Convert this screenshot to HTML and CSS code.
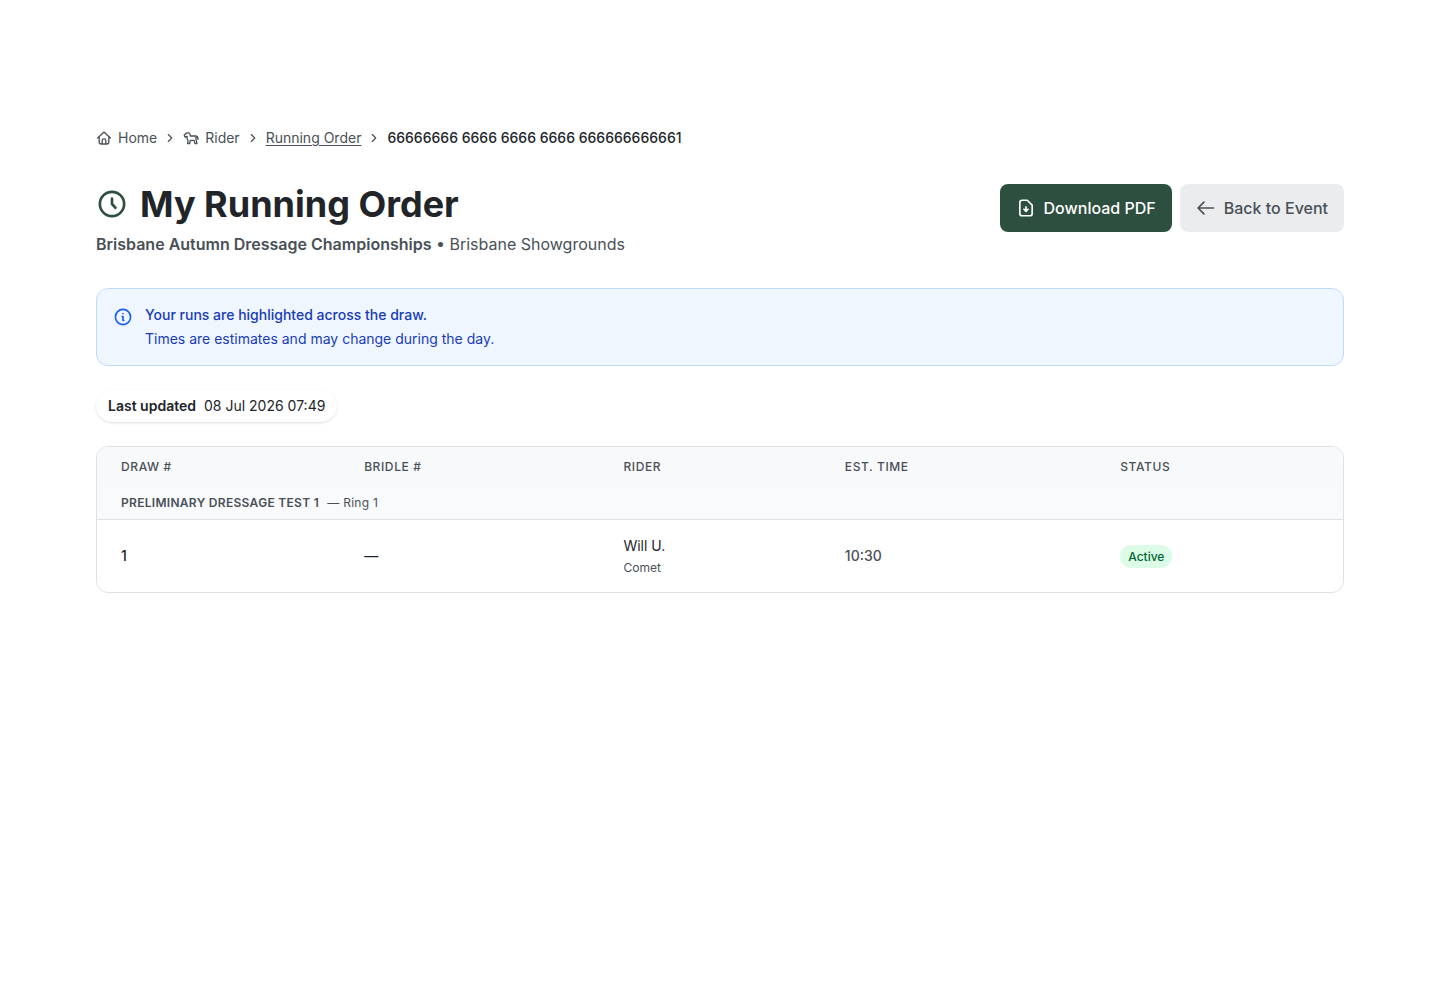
FILE: index.html
```html
<!DOCTYPE html>
<html lang="en">
<head>
<meta charset="utf-8">
<meta name="viewport" content="width=device-width, initial-scale=1">
<title>My Running Order</title>
<link rel="stylesheet" href="styles.css">
</head>
<body>
<main class="page">
  <nav class="crumbs" aria-label="Breadcrumb">
    <a class="crumb" href="#home">
      <svg class="icon icon-sm" viewBox="0 0 24 24" aria-hidden="true"><path d="M2.500 12 10.800 4Q12 2.900 13.200 4L21.500 12M4.800 10.500V18Q4.800 21 8 21H16Q19.200 21 19.200 18V10.500M9.300 20.500V15.500Q9.300 13.300 12 13.300T14.700 15.500V20.500"/></svg>
      Home</a>
    <svg class="icon icon-chevron" viewBox="0 0 24 24" aria-hidden="true"><path d="m9 6 6 6-6 6"/></svg>
    <a class="crumb" href="#rider">
      <svg class="icon icon-sm" viewBox="0 0 24 24" aria-hidden="true"><path d="M11 9H18.500Q22.500 9 22.500 14M19.500 9.500V14.500L21 20.500H18L16.500 15.500H11L10 20.500H7L7.500 15.500Q5.500 13.500 6.200 9.500L3 10.500 1.800 7.500 5.500 4.500Q11 3 11 9"/></svg>
      Rider</a>
    <svg class="icon icon-chevron" viewBox="0 0 24 24" aria-hidden="true"><path d="m9 6 6 6-6 6"/></svg>
    <a class="crumb crumb-underlined" href="#running-order">Running Order</a>
    <svg class="icon icon-chevron" viewBox="0 0 24 24" aria-hidden="true"><path d="m9 6 6 6-6 6"/></svg>
    <span class="crumb-current" aria-current="page">66666666 6666 6666 6666 666666666661</span>
  </nav>

  <header class="header">
    <div>
      <h1 class="title">
        <svg class="icon icon-title" viewBox="0 0 24 24" aria-hidden="true"><circle cx="12" cy="12" r="9.100"/><path d="M12 8V12l2.600 2.800"/></svg>
        My Running Order</h1>
      <p class="subtitle"><strong>Brisbane Autumn Dressage Championships</strong> • Brisbane Showgrounds</p>
    </div>
    <div class="actions">
      <button class="button button-primary" type="button">
        <svg class="icon icon-md" viewBox="0 0 24 24" aria-hidden="true"><path d="M7.500 2.700H13.500L19.400 8.600V18.500Q19.400 21.300 16.500 21.300H7.500Q4.600 21.300 4.600 18.500V5.500Q4.600 2.700 7.500 2.700ZM12 10.500V15.500M9.500 13.500 12 16 14.500 13.500"/></svg>
        Download PDF</button>
      <a class="button button-secondary" href="#event">
        <svg class="icon icon-md" viewBox="0 0 24 24" aria-hidden="true"><path d="M21 12H3M9.500 5 2.500 12 9.500 19"/></svg>
        Back to Event</a>
    </div>
  </header>

  <section class="notice">
    <svg class="icon icon-md icon-notice" viewBox="0 0 24 24" aria-hidden="true"><circle cx="12" cy="12" r="9.100"/><path d="M11 11.500H12V16H13M12 8V8.100"/></svg>
    <div class="notice-text">
      <p class="notice-title">Your runs are highlighted across the draw.</p>
      <p>Times are estimates and may change during the day.</p>
    </div>
  </section>

  <div class="updated"><span class="updated-label">Last updated</span><time datetime="2026-07-08T07:49">08 Jul 2026 07:49</time></div>

  <div class="card">
    <table class="draw">
      <thead>
        <tr><th scope="col">Draw #</th><th scope="col">Bridle #</th><th scope="col">Rider</th><th scope="col">Est. time</th><th scope="col">Status</th></tr>
      </thead>
      <tbody>
        <tr class="group"><td colspan="5"><span class="group-name">Preliminary Dressage Test 1</span><span class="ring">— Ring 1</span></td></tr>
        <tr class="run">
          <td class="strong">1</td>
          <td class="strong">—</td>
          <td><div>Will U.</div><div class="horse">Comet</div></td>
          <td class="time">10:30</td>
          <td><span class="badge">Active</span></td>
        </tr>
      </tbody>
    </table>
  </div>
</main>
</body>
</html>
```
FILE: styles.css
```css
:root {
  --ink: #212529;
  --muted: #495057;
  --line: #dee2e6;
  --green: #2d4f3f;
}

* { box-sizing: border-box; }

body {
  margin: 0;
  background: #fff;
  color: var(--ink);
  font: 14px/20px Inter, sans-serif;
}

h1, p { margin: 0; }

.page {
  max-width: 1280px;
  margin: 0 auto;
  padding: 128px 16px 32px;
}

.icon {
  flex: none;
  fill: none;
  stroke: currentColor;
  stroke-width: 2;
  stroke-linecap: round;
  stroke-linejoin: round;
}
.icon-sm { width: 16px; height: 16px; }
.icon-md { width: 20px; height: 20px; }
.icon-chevron { width: 14px; height: 14px; }
.icon-title { width: 32px; height: 32px; color: var(--green); }

.crumbs {
  display: flex;
  flex-wrap: wrap;
  align-items: center;
  gap: 6px;
  margin-bottom: 36px;
  color: var(--muted);
}
.crumb {
  display: flex;
  align-items: center;
  gap: 6px;
  color: inherit;
  text-decoration: none;
}
.crumb-underlined {
  text-decoration: underline;
  text-underline-offset: 2px;
}
.crumb-current { color: var(--ink); font-weight: 500; }

.header {
  display: flex;
  flex-wrap: wrap;
  justify-content: space-between;
  align-items: flex-start;
  gap: 16px;
  margin-bottom: 32px;
}
.title {
  display: flex;
  align-items: center;
  gap: 12px;
  font-size: 36px;
  line-height: 40px;
  font-weight: 700;
}
.subtitle {
  margin-top: 8px;
  color: var(--muted);
  font-size: 16px;
  line-height: 24px;
}
.subtitle strong { font-weight: 600; }

.actions { display: flex; flex-wrap: wrap; gap: 8px; }
.button {
  display: inline-flex;
  align-items: center;
  gap: 8px;
  padding: 12px 16px;
  border: 0;
  border-radius: 8px;
  font: 500 16px/24px Inter, sans-serif;
  text-decoration: none;
  cursor: pointer;
}
.button-primary { background: var(--green); color: #fff; }
.button-secondary { background: #ebecee; color: var(--muted); }

.notice {
  display: flex;
  align-items: flex-start;
  gap: 12px;
  padding: 16px;
  border: 1px solid #bedbff;
  border-radius: 12px;
  background: #eff6ff;
  color: #193cb8;
}
.notice-text { display: grid; gap: 4px; }
.notice-title { font-weight: 500; }
.icon-notice { margin-top: 2px; color: #155dfc; }

.updated {
  display: flex;
  gap: 8px;
  width: fit-content;
  margin: 24px 0;
  padding: 6px 12px;
  border-radius: 16px;
  box-shadow: 0 1px 3px rgb(0 0 0 / 10%), 0 1px 2px -1px rgb(0 0 0 / 10%);
}
.updated-label { font-weight: 600; }

.card {
  overflow: hidden;
  border: 1px solid var(--line);
  border-radius: 12px;
}
.draw {
  width: 100%;
  border-collapse: collapse;
  text-align: left;
}
.draw th {
  padding: 12px 24px;
  background: #f8f9fb;
  color: var(--muted);
  font-size: 12px;
  line-height: 16px;
  font-weight: 500;
  letter-spacing: 0.05em;
  text-transform: uppercase;
}
.draw td { padding: 16px 24px; }
.draw .group td {
  padding: 8px 24px;
  background: #f9fafc;
  color: var(--muted);
  font-size: 12px;
  line-height: 16px;
  letter-spacing: 0.025em;
}
.group-name { font-weight: 600; text-transform: uppercase; }
.ring { margin-left: 8px; }
.run { border-top: 1px solid var(--line); }
.strong { font-weight: 500; }
.time { color: var(--muted); font-weight: 500; }
.horse {
  margin-top: 4px;
  color: var(--muted);
  font-size: 12px;
  line-height: 16px;
}
.badge {
  padding: 4px 8px;
  border-radius: 12px;
  background: #dcfce7;
  color: #016630;
  font-size: 12px;
  line-height: 16px;
  font-weight: 500;
}
```
